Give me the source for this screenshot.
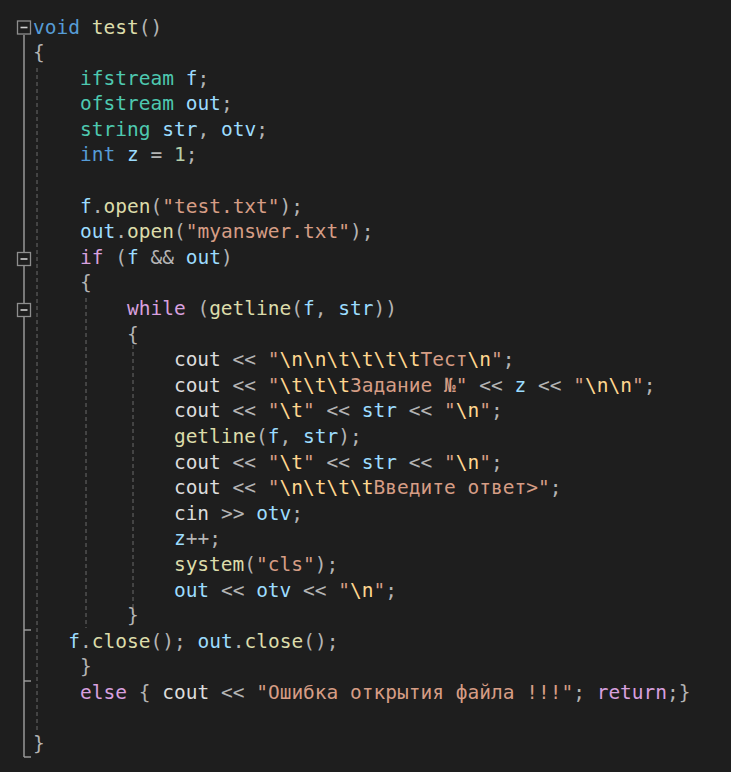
import React from 'react';

const code = [
  'void test()',
  '{',
  '    ifstream f;',
  '    ofstream out;',
  '    string str, otv;',
  '    int z = 1;',
  '',
  '    f.open("test.txt");',
  '    out.open("myanswer.txt");',
  '    if (f && out)',
  '    {',
  '        while (getline(f, str))',
  '        {',
  '            cout << "\\n\\n\\t\\t\\t\\tТест\\n";',
  '            cout << "\\t\\t\\tЗадание №" << z << "\\n\\n";',
  '            cout << "\\t" << str << "\\n";',
  '            getline(f, str);',
  '            cout << "\\t" << str << "\\n";',
  '            cout << "\\n\\t\\t\\tВведите ответ>";',
  '            cin >> otv;',
  '            z++;',
  '            system("cls");',
  '            out << otv << "\\n";',
  '        }',
  '   f.close(); out.close();',
  '    }',
  '    else { cout << "Ошибка открытия файла !!!"; return;}',
  '',
  '}',
];

const keywords = ['void', 'int'];
const control = ['if', 'while', 'else', 'return'];
const types = ['ifstream', 'ofstream', 'string'];
const funcs = ['test', 'open', 'getline', 'close', 'system'];
const vars = ['f', 'out', 'str', 'otv', 'z'];

type Tok = { text: string; cls: string };

// crude highlighter, good enough for this snippet
const tokenize = (line: string): Tok[] => {
  const out: Tok[] = [];
  const re = /("(?:[^"\\]|\\.)*")|([A-Za-z_]\w*)|(\d+)|(\s+)|(.)/g;
  let m: RegExpExecArray | null;
  while ((m = re.exec(line))) {
    if (m[1]) {
      const parts = m[1].split(/(\\.)/);
      parts.forEach((p) => {
        if (!p) return;
        out.push({ text: p, cls: p.startsWith('\\') ? 'text-[#ffd68f]' : 'text-[#d69d85]' });
      });
    } else if (m[2]) {
      const w = m[2];
      let cls = 'text-[#dcdcdc]';
      if (keywords.includes(w)) cls = 'text-[#569cd6]';
      else if (control.includes(w)) cls = 'text-[#d8a0df]';
      else if (types.includes(w)) cls = 'text-[#4ec9b0]';
      else if (funcs.includes(w)) cls = 'text-[#dcdcaa]';
      else if (vars.includes(w)) cls = 'text-[#9cdcfe]';
      out.push({ text: w, cls });
    } else if (m[3]) {
      out.push({ text: m[3], cls: 'text-[#b5cea8]' });
    } else if (m[4]) {
      out.push({ text: m[4], cls: '' });
    } else {
      out.push({ text: m[5], cls: 'text-[#b4b4b4]' });
    }
  }
  return out;
};

const FoldBox = ({ y }: { y: number }) => (
  <g>
    <rect x={17.5} y={y} width={13} height={13} fill="#1e1e1e" stroke="#8e8e8e" strokeWidth={1.3} />
    <line x1={20.5} y1={y + 6.5} x2={27.5} y2={y + 6.5} stroke="#d0d0d0" strokeWidth={1.6} />
  </g>
);

const Gutter = () => (
  <svg className="absolute inset-0 pointer-events-none" width={731} height={772}>
    {/* outlining */}
    <line x1={24} y1={35} x2={24} y2={252} stroke="#a0a0a0" strokeWidth={1.4} />
    <line x1={24} y1={266} x2={24} y2={303} stroke="#a0a0a0" strokeWidth={1.4} />
    <line x1={24} y1={317} x2={24} y2={757} stroke="#a0a0a0" strokeWidth={1.4} />
    <line x1={24} y1={630} x2={31} y2={630} stroke="#a0a0a0" strokeWidth={1.4} />
    <line x1={24} y1={681} x2={31} y2={681} stroke="#a0a0a0" strokeWidth={1.4} />
    <line x1={24} y1={757} x2={31} y2={757} stroke="#a0a0a0" strokeWidth={1.4} />
    <FoldBox y={21} />
    <FoldBox y={252.5} />
    <FoldBox y={303.5} />
    {/* indent guides */}
    <line x1={37} y1={68} x2={37} y2={733} stroke="#5e5e5e" strokeWidth={1.2} strokeDasharray="4 3" />
    <line x1={86} y1={298} x2={86} y2={628} stroke="#5e5e5e" strokeWidth={1.2} strokeDasharray="4 3" />
    <line x1={133} y1={345} x2={133} y2={613} stroke="#5e5e5e" strokeWidth={1.2} strokeDasharray="4 3" />
  </svg>
);

export default function App() {
  return (
    <div className="relative w-[731px] h-[772px] bg-[#1e1e1e] overflow-hidden">
      <Gutter />
      <div className="relative pt-[14.5px] pl-[33px] font-['DejaVu_Sans_Mono',monospace] text-[19.5px] leading-[25.6px] text-[#dcdcdc] whitespace-pre">
        {code.map((line, i) => (
          <div key={i} className="h-[25.6px]">
            {tokenize(line).map((t, j) => (
              <span key={j} className={t.cls}>
                {t.text}
              </span>
            ))}
          </div>
        ))}
      </div>
    </div>
  );
}
